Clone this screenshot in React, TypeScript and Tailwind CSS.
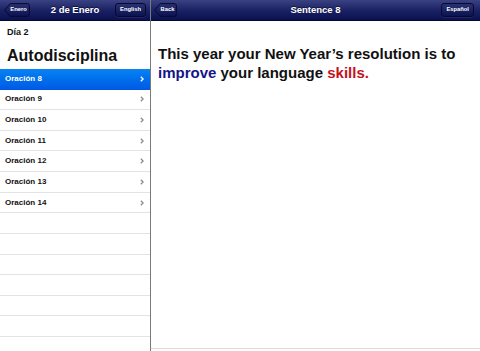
import { useId } from 'react'

const rows = ['Oración 8', 'Oración 9', 'Oración 10', 'Oración 11', 'Oración 12', 'Oración 13', 'Oración 14']

function BackButton({ label, width }: { label: string; width: number }) {
  const id = useId().replace(/:/g, '')
  const w = width
  const d = `M0.6 7 L6.2 0.6 H${w - 2.6} Q${w - 0.6} 0.6 ${w - 0.6} 2.6 V11.4 Q${w - 0.6} 13.4 ${w - 2.6} 13.4 H6.2 Z`
  return (
    <div className="relative h-[14px]">
      <svg width={w} height={14} viewBox={`0 0 ${w} 14`} className="block">
        <defs>
          <linearGradient id={id} x1="0" y1="0" x2="0" y2="1">
            <stop offset="0" stopColor="#2a3272" />
            <stop offset="1" stopColor="#0c1250" />
          </linearGradient>
        </defs>
        <path d={d} fill={`url(#${id})`} stroke="#060a33" strokeWidth="1" />
      </svg>
      <span className="absolute inset-0 flex items-center justify-center pl-[4px] text-[5.8px] font-bold text-white">
        {label}
      </span>
    </div>
  )
}

function BarButton({ label }: { label: string }) {
  return (
    <div className="flex h-[14px] items-center rounded-[3px] border border-[#060a33] bg-gradient-to-b from-[#2a3272] to-[#0c1250] px-[4px] text-[5.8px] font-bold text-white shadow-[0_0.5px_0_rgba(255,255,255,0.15)]">
      {label}
    </div>
  )
}

function NavBar({ left, title, right }: { left: React.ReactNode; title: string; right: React.ReactNode }) {
  return (
    <div className="grid h-[20.6px] shrink-0 grid-cols-[1fr_auto_1fr] items-center border-b border-[#050829] bg-gradient-to-b from-[#3a4283] via-[#1c2365] to-[#0a1050]">
      <div className="flex justify-start">{left}</div>
      <div className="text-[9.5px] font-bold text-white [text-shadow:0_-1px_0_rgba(0,0,0,0.5)]">{title}</div>
      <div className="flex justify-end">{right}</div>
    </div>
  )
}

function Chevron({ selected }: { selected: boolean }) {
  return (
    <svg width="4" height="6" viewBox="0 0 4 6" className="block">
      <path
        d="M0.8 0.7 L3.1 3 L0.8 5.3"
        fill="none"
        stroke={selected ? '#ffffff' : '#8c8c8c'}
        strokeWidth="1.3"
      />
    </svg>
  )
}

export default function App() {
  return (
    <div className="flex h-[351px] w-[480px] overflow-hidden bg-white font-['Liberation_Sans',Arial,sans-serif]">
      {/* Master list */}
      <aside className="flex w-[150px] shrink-0 flex-col">
        <NavBar
          title="2 de Enero"
          left={<div className="pl-[3.5px]"><BackButton label="Enero" width={26} /></div>}
          right={<div className="pr-[4px]"><BarButton label="English" /></div>}
        />
        <div className="h-[48.4px] shrink-0 px-[7px]">
          <p className="pt-[6px] text-[9px] font-bold leading-[10px] text-[#111]">Día 2</p>
          <h1 className="mt-[9px] text-[16px] font-bold leading-[20px] text-[#111]">Autodisciplina</h1>
        </div>
        <div className="flex flex-col">
          {rows.map((row, i) => {
            const selected = i === 0
            return (
              <div
                key={row}
                className={`flex h-[20.625px] shrink-0 items-center justify-between pl-[5px] pr-[6px] ${
                  selected
                    ? 'bg-gradient-to-b from-[#0a83f3] to-[#0058e4] text-white'
                    : 'border-b border-[#e3e3e3] text-[#111]'
                }`}
              >
                <span className="text-[8px] font-bold">{row}</span>
                <Chevron selected={selected} />
              </div>
            )
          })}
          {Array.from({ length: 7 }).map((_, i) => (
            <div key={i} className="h-[20.625px] shrink-0 border-b border-[#e3e3e3]" />
          ))}
        </div>
      </aside>

      <div className="w-px shrink-0 bg-[#7a7a7a]" />

      {/* Detail */}
      <main className="flex flex-1 flex-col">
        <NavBar
          title="Sentence 8"
          left={<div className="pl-[3px]"><BackButton label="Back" width={23} /></div>}
          right={<div className="pr-[6px]"><BarButton label="Español" /></div>}
        />
        <div className="flex-1 px-[7px] pt-[23px]">
          <p className="text-[15px] font-bold leading-[19px] text-[#111]">
            This year your New Year’s resolution is to{' '}
            <span className="text-[#14148c]">improve</span> your language{' '}
            <span className="text-[#c4121b]">skills.</span>
          </p>
        </div>
        <div className="h-[3px] shrink-0 border-t border-[#dcdcdc]" />
      </main>
    </div>
  )
}
